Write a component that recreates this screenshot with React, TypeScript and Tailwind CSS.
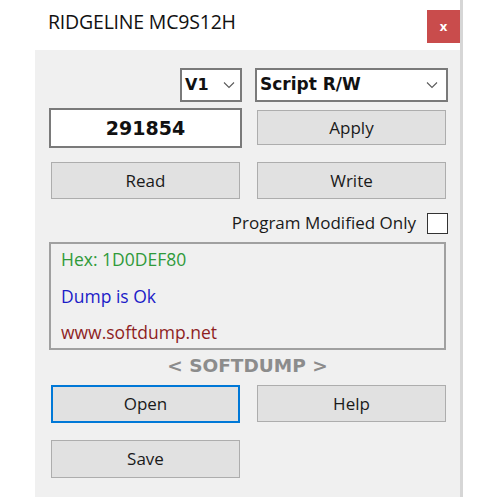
import React from 'react';

const ui = { fontFamily: '"Open Sans", "Noto Sans", sans-serif' };
const bold = { fontFamily: '"DejaVu Sans", Verdana, sans-serif' };

const Chevron = () => (
  <svg width="12" height="8" viewBox="0 0 12 8" className="shrink-0">
    <polyline points="1,1.5 6,6.5 11,1.5" fill="none" stroke="#5a5a5a" strokeWidth="1.1" />
  </svg>
);

const Btn = ({ label, focused = false, className = '' }: { label: string; focused?: boolean; className?: string }) => (
  <button
    className={`bg-[#e1e1e1] text-[17px] text-[#1a1a1a] flex items-center justify-center ${
      focused ? 'border-2 border-[#0078d7]' : 'border border-[#adadad]'
    } ${className}`}
    style={ui}
  >
    {label}
  </button>
);

export default function App() {
  return (
    <div className="w-[500px] h-[500px] bg-white overflow-hidden pl-[35px]">
      <div className="w-[428px] h-[497px] flex flex-col border-r-[3px] border-[#d6d6d6]">
        {/* title bar */}
        <div className="h-[50px] bg-white flex items-start justify-between pl-[13px]">
          <span className="mt-[8px] text-[19.5px] leading-[28px] text-[#111] tracking-[-0.2px]" style={ui}>
            RIDGELINE MC9S12H
          </span>
          <div className="mt-[10px] w-[33px] h-[33px] bg-[#c94c4c] flex items-center justify-center text-white text-[13px] font-bold" style={ui}>
            x
          </div>
        </div>

        {/* form body */}
        <div className="flex-1 bg-[#f0f0f0] pl-[14px] pr-[12px] pt-[18px] flex flex-col">
          <div className="flex justify-end gap-[13px]">
            <div className="w-[62px] h-[34px] bg-white border-2 border-[#7a7a7a] flex items-center justify-between pl-[3px] pr-[5px]">
              <span className="text-[16px] font-bold text-[#111]" style={bold}>V1</span>
              <Chevron />
            </div>
            <div className="w-[193px] h-[34px] bg-white border-2 border-[#7a7a7a] flex items-center justify-between pl-[3px] pr-[8px]">
              <span className="text-[17px] font-bold text-[#111]" style={bold}>Script R/W</span>
              <Chevron />
            </div>
          </div>

          <div className="flex items-start mt-[6px]">
            <div className="w-[193px] h-[40px] bg-white border-2 border-[#7a7a7a] flex items-center justify-center">
              <span className="text-[19px] font-bold text-[#111]" style={bold}>291854</span>
            </div>
            <Btn label="Apply" className="w-[189px] h-[35px] mt-[2px] ml-[15px]" />
          </div>

          <div className="flex mt-[14px] pl-[2px]">
            <Btn label="Read" className="w-[189px] h-[37px]" />
            <Btn label="Write" className="w-[189px] h-[37px] ml-[17px]" />
          </div>

          <div className="flex items-center justify-end mt-[13px] gap-[11px]">
            <span className="text-[17px] leading-[22px] text-[#1a1a1a]" style={ui}>Program Modified Only</span>
            <div className="w-[21px] h-[21px] bg-white border-[1.5px] border-[#333]" />
          </div>

          <div className="mt-[8px] w-[397px] h-[108px] border-2 border-[#a0a0a0] flex flex-col justify-between pl-[10px] pt-[1px] pb-[2px] text-[17.5px] leading-[28px]" style={ui}>
            <span className="text-[#2f9a3a]">Hex: 1D0DEF80</span>
            <span className="text-[#1c1cc8]">Dump is Ok</span>
            <span className="text-[#8e1f1f]">www.softdump.net</span>
          </div>

          <div className="w-[397px] text-center text-[18.5px] leading-[22px] font-bold text-[#8c8c8c] mt-[5px]" style={bold}>
            &lt; SOFTDUMP &gt;
          </div>

          <div className="flex mt-[8px] pl-[2px]">
            <Btn label="Open" focused className="w-[189px] h-[38px]" />
            <Btn label="Help" className="w-[189px] h-[37px] ml-[17px]" />
          </div>

          <div className="flex mt-[17px] pl-[2px]">
            <Btn label="Save" className="w-[189px] h-[38px]" />
          </div>
        </div>
      </div>
    </div>
  );
}
